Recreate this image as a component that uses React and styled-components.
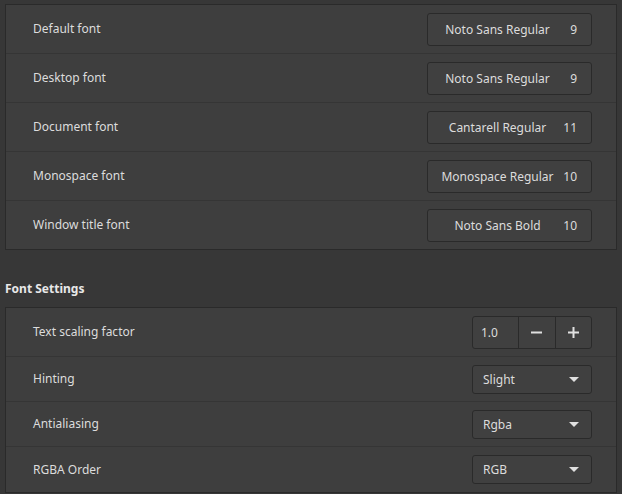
import React from "react";
import styled, { createGlobalStyle } from "styled-components";

const Global = createGlobalStyle`
  html, body { margin: 0; padding: 0; background: #373737; }
  body { font-family: "Noto Sans", "DejaVu Sans", sans-serif; font-size: 12px; color: #dcdcdc; }
`;

const Page = styled.div`
  width: 622px;
  height: 494px;
  box-sizing: border-box;
  padding: 4px 5px 0 5px;
  display: flex;
  flex-direction: column;
  overflow: hidden;
`;

const Panel = styled.div`
  background: #3e3e3e;
  border: 1px solid #2a2a2a;
  display: flex;
  flex-direction: column;
`;

const Row = styled.div`
  height: ${(p) => p.$h}px;
  display: flex;
  align-items: center;
  justify-content: space-between;
  padding: 0 24px 0 27px;
  & + & { border-top: 1px solid #353535; }
`;

const Label = styled.span`
  color: #dcdcdc;
  font-size: 12px;
  line-height: 16px;
`;

const Heading = styled.div`
  font-weight: bold;
  font-size: 12px;
  color: #e8e8e8;
  line-height: 16px;
  padding: 31px 0 0 0;
  height: 26px;
  box-sizing: content-box;
`;

const FontButton = styled.div`
  width: 165px;
  height: 33px;
  box-sizing: border-box;
  border: 1px solid #2a2a2a;
  border-radius: 3px;
  background: #404040;
  display: flex;
  align-items: center;
  padding: 0 14px 0 8px;
`;

const FontName = styled.span`
  flex: 1;
  text-align: center;
  white-space: nowrap;
  color: #dcdcdc;
`;

const FontSize = styled.span`
  width: 18px;
  text-align: right;
  color: #dcdcdc;
`;

const Spin = styled.div`
  width: 120px;
  height: 33px;
  box-sizing: border-box;
  border: 1px solid #2a2a2a;
  border-radius: 3px;
  background: #404040;
  display: flex;
  overflow: hidden;
`;

const SpinEntry = styled.div`
  width: 46px;
  display: flex;
  align-items: center;
  padding-left: 8px;
  box-sizing: border-box;
  color: #dcdcdc;
`;

const SpinBtn = styled.div`
  width: ${(p) => p.$w}px;
  border-left: 1px solid #2a2a2a;
  display: flex;
  align-items: center;
  justify-content: center;
`;

const Combo = styled.div`
  width: 120px;
  height: 29px;
  box-sizing: border-box;
  border: 1px solid #2a2a2a;
  border-radius: 3px;
  background: #404040;
  display: flex;
  align-items: center;
  justify-content: space-between;
  padding: 0 12px 0 10px;
  color: #dcdcdc;
`;

const Arrow = () => (
  <svg width="10" height="5" viewBox="0 0 10 5">
    <path d="M0 0 L10 0 L5 5 Z" fill="#e0e0e0" />
  </svg>
);

const Minus = () => (
  <svg width="11" height="11" viewBox="0 0 11 11">
    <rect x="0" y="4.5" width="11" height="2" fill="#e0e0e0" />
  </svg>
);

const Plus = () => (
  <svg width="11" height="11" viewBox="0 0 11 11">
    <rect x="0" y="4.5" width="11" height="2" fill="#e0e0e0" />
    <rect x="4.5" y="0" width="2" height="11" fill="#e0e0e0" />
  </svg>
);

const fonts = [
  ["Default font", "Noto Sans Regular", "9"],
  ["Desktop font", "Noto Sans Regular", "9"],
  ["Document font", "Cantarell Regular", "11"],
  ["Monospace font", "Monospace Regular", "10"],
  ["Window title font", "Noto Sans Bold", "10"],
];

const combos = [
  ["Hinting", "Slight", 44],
  ["Antialiasing", "Rgba", 44],
  ["RGBA Order", "RGB", 45],
];

export default function App() {
  return (
    <>
      <Global />
      <Page>
        <Panel>
          {fonts.map(([label, name, size]) => (
            <Row key={label} $h={48}>
              <Label>{label}</Label>
              <FontButton>
                <FontName>{name}</FontName>
                <FontSize>{size}</FontSize>
              </FontButton>
            </Row>
          ))}
        </Panel>
        <Heading>Font Settings</Heading>
        <Panel>
          <Row $h={48}>
            <Label>Text scaling factor</Label>
            <Spin>
              <SpinEntry>1.0</SpinEntry>
              <SpinBtn $w={37}><Minus /></SpinBtn>
              <SpinBtn $w={36}><Plus /></SpinBtn>
            </Spin>
          </Row>
          {combos.map(([label, value, h]) => (
            <Row key={label} $h={h}>
              <Label>{label}</Label>
              <Combo>
                <span>{value}</span>
                <Arrow />
              </Combo>
            </Row>
          ))}
        </Panel>
      </Page>
    </>
  );
}
